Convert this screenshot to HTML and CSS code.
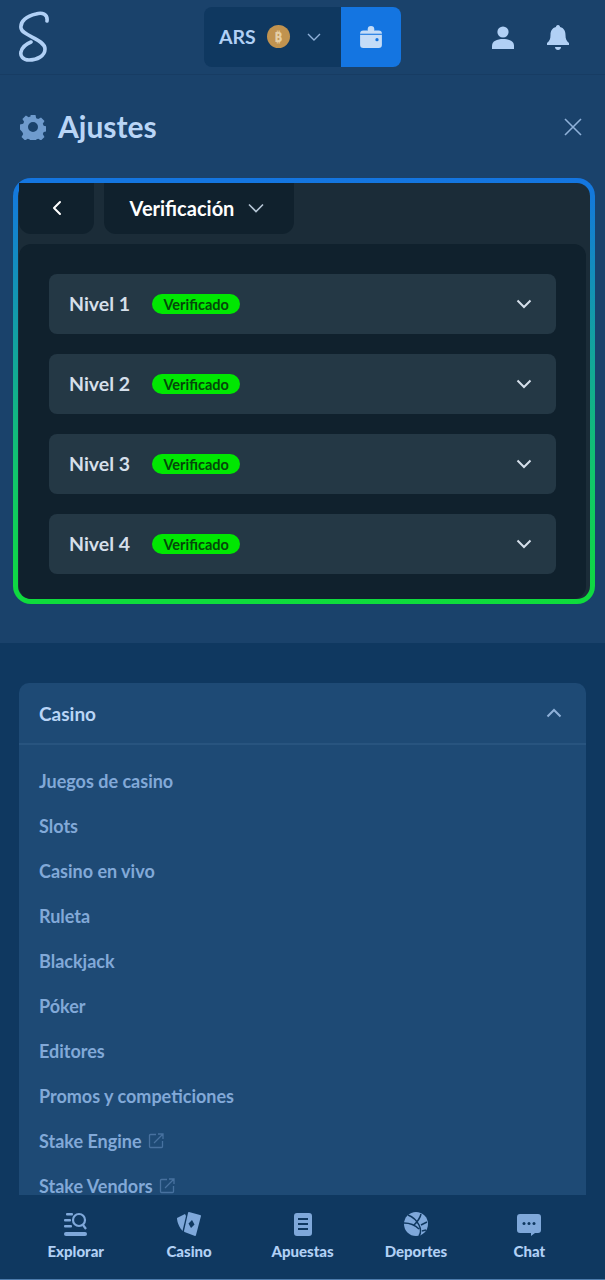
FILE: index.html
```html
<!DOCTYPE html>
<html lang="es">
<head>
<meta charset="UTF-8">
<meta name="viewport" content="width=device-width, initial-scale=1.0">
<title>Ajustes</title>
<link rel="stylesheet" href="styles.css">
</head>
<body>

<header class="topbar">
    <svg class="logo" viewBox="0 0 32 52" fill="none" stroke="#b1d0f5" stroke-width="3.6" stroke-linecap="round"><path d="M30 10C31 3 25 1 19 3C10 5 3 10 4 17C5 25 28 28 28 38C28 45 20 49 12 49C6 49 3 45 4 41C5 36 9 33 14 31"/></svg>
    <div class="wallet">
        <div class="wallet-balance">
            <span class="currency">ARS</span>
            <span class="coin">₿</span>
            <svg class="chev-sm" viewBox="0 0 14 8" fill="none" stroke="#8fb1d9" stroke-width="1.4"><path d="M1 1l6 6 6-6"/></svg>
        </div>
        <button class="wallet-btn">
            <svg width="24" height="24" viewBox="0 0 22 22"><circle cx="11" cy="4" r="3" fill="#c4dcf7"/><rect x="1" y="5" width="20" height="16" rx="3" fill="#c4dcf7"/><rect x="1" y="8" width="20" height="1" fill="#1475e1"/><rect x="15" y="12" width="3" height="3" rx="1.5" fill="#1475e1"/></svg>
        </button>
    </div>
    <div class="top-icons">
        <svg width="24" height="24" viewBox="0 0 24 24" fill="#b1d0f5"><circle cx="12" cy="7" r="5.6"/><path d="M1 24v-3c0-5 5-7 11-7s11 2 11 7v3z"/></svg>
        <svg width="24" height="26" viewBox="0 0 24 26" fill="#b1d0f5"><path d="M12 1c1.500 0 2 1 2 2 4 1 5.500 4 5.500 8 0 4 1 6 3.500 8v2H1v-2c2.500-2 3.500-4 3.500-8 0-4 1.500-7 5.500-8 0-1 .5-2 2-2z"/><path d="M9 23h6c0 2-1.500 3-3 3s-3-1-3-3z"/></svg>
    </div>
</header>

<section class="settings">
    <div class="settings-head">
        <h1 class="settings-title">
            <svg width="26" height="26" viewBox="0 0 26 26"><path fill="#6f9bcd" fill-rule="evenodd" d="M10.500 1h5l.7 3.200 2 .9 2.800-1.700 3.500 3.500-1.700 2.800.9 2 3.200.7v5l-3.200.7-.9 2 1.700 2.800-3.500 3.500-2.800-1.700-2 .9-.7 3.200h-5l-.7-3.200-2-.9-2.800 1.700-3.500-3.500 1.700-2.800-.9-2L0 15.500v-5l3.200-.7.9-2-1.700-2.800L5.900 1.500l2.800 1.700 2-.9zM13 8a5 5 0 1 0 0 10 5 5 0 0 0 0-10z"/></svg>
            <span class="title-text">Ajustes</span>
        </h1>
        <svg class="close" viewBox="0 0 18 18" fill="none" stroke="#8fb1d9" stroke-width="1.600"><path d="M1 1l16 16M17 1L1 17"/></svg>
    </div>

    <div class="panel">
        <div class="panel-tabs">
            <button class="tab tab-back">
                <svg width="10" height="16" viewBox="0 0 10 16" fill="none" stroke="#fff" stroke-width="2" stroke-linecap="round" stroke-linejoin="round"><path d="M8 2L2 8l6 6"/></svg>
            </button>
            <button class="tab tab-select">
                Verificación
                <svg width="16" height="10" viewBox="0 0 16 10" fill="none" stroke="#b6c6d6" stroke-width="1.600"><path d="M1 1.500l7 7 7-7"/></svg>
            </button>
        </div>
        <div class="levels">
            <div class="level">
                <span class="level-name">Nivel 1</span><span class="badge">Verificado</span>
                <svg class="level-chev" viewBox="0 0 16 10" fill="none" stroke="#d5dfea" stroke-width="2"><path d="M1.500 1.500L8 8l6.500-6.500"/></svg>
            </div>
            <div class="level">
                <span class="level-name">Nivel 2</span><span class="badge">Verificado</span>
                <svg class="level-chev" viewBox="0 0 16 10" fill="none" stroke="#d5dfea" stroke-width="2"><path d="M1.500 1.500L8 8l6.500-6.500"/></svg>
            </div>
            <div class="level">
                <span class="level-name">Nivel 3</span><span class="badge">Verificado</span>
                <svg class="level-chev" viewBox="0 0 16 10" fill="none" stroke="#d5dfea" stroke-width="2"><path d="M1.500 1.500L8 8l6.500-6.500"/></svg>
            </div>
            <div class="level">
                <span class="level-name">Nivel 4</span><span class="badge">Verificado</span>
                <svg class="level-chev" viewBox="0 0 16 10" fill="none" stroke="#d5dfea" stroke-width="2"><path d="M1.500 1.500L8 8l6.500-6.500"/></svg>
            </div>
        </div>
    </div>
</section>

<section class="footer-area">
    <div class="menu-card">
        <div class="menu-head">
            <span>Casino</span>
            <svg width="16" height="10" viewBox="0 0 16 10" fill="none" stroke="#8fb1d9" stroke-width="2"><path d="M1.500 8.500L8 2l6.500 6.500"/></svg>
        </div>
        <ul class="menu-list">
            <li>Juegos de casino</li>
            <li>Slots</li>
            <li>Casino en vivo</li>
            <li>Ruleta</li>
            <li>Blackjack</li>
            <li>Póker</li>
            <li>Editores</li>
            <li>Promos y competiciones</li>
            <li>Stake Engine <svg width="16" height="16" viewBox="0 0 16 16" fill="none" stroke="#47719f" stroke-width="1.300"><path d="M8 1.500H2.500a1 1 0 0 0-1 1v11a1 1 0 0 0 1 1h11a1 1 0 0 0 1-1V8M6 10l8.500-8.500M10 1h5v5"/></svg></li>
            <li>Stake Vendors <svg width="16" height="16" viewBox="0 0 16 16" fill="none" stroke="#47719f" stroke-width="1.300"><path d="M8 1.500H2.500a1 1 0 0 0-1 1v11a1 1 0 0 0 1 1h11a1 1 0 0 0 1-1V8M6 10l8.500-8.500M10 1h5v5"/></svg></li>
        </ul>
    </div>
</section>

<nav class="bottom-nav">
    <div class="nav-item">
        <svg width="24" height="24" viewBox="0 0 24 24" fill="#7fa8da"><rect x="2" y="1" width="7" height="2.500" rx="1"/><rect x="0" y="7" width="7" height="2.500" rx="1"/><rect x="0" y="13" width="8" height="2.500" rx="1"/><rect x="0" y="20" width="23" height="4" rx="2"/><circle cx="15" cy="8" r="6" fill="none" stroke="#7fa8da" stroke-width="2.200"/><path d="M19 13l3 4" stroke="#7fa8da" stroke-width="2.200"/></svg>
        <span>Explorar</span>
    </div>
    <div class="nav-item">
        <svg width="24" height="24" viewBox="0 0 24 24" fill="#7fa8da"><path d="M8 2L0 6c0 5 3 10 5.500 13L9 4z"/><path d="M12 0l11 3a1 1 0 0 1 1 1l-5 19a1 1 0 0 1-1 1L7.500 20a1 1 0 0 1-.5-1L11 1a1 1 0 0 1 1-1zm3 8l-3.500 3.500 2.500 4.500 3.500-3.500z" fill-rule="evenodd"/></svg>
        <span>Casino</span>
    </div>
    <div class="nav-item">
        <svg width="24" height="24" viewBox="0 0 24 24"><path fill="#7fa8da" fill-rule="evenodd" d="M6 1h12a3 3 0 0 1 3 3v17a3 3 0 0 1-3 3H6a3 3 0 0 1-3-3V4a3 3 0 0 1 3-3zm1 5v2h10V6zm0 5v2h10v-2zm0 5v2h10v-2z"/></svg>
        <span>Apuestas</span>
    </div>
    <div class="nav-item">
        <svg width="24" height="24" viewBox="0 0 24 24"><circle cx="12" cy="12" r="12" fill="#7fa8da"/><path fill="none" stroke="#0f3860" stroke-width="1.500" d="M4 3c5 2 9 6 11 10s2 8 0 11M0 11c6 0 12 3 15 6M10 13c3-3 6-6 7-11M17 13l6-3M18 19l4-1"/></svg>
        <span>Deportes</span>
    </div>
    <div class="nav-item">
        <svg width="24" height="24" viewBox="0 0 24 24"><path fill="#7fa8da" d="M3 2h18a3 3 0 0 1 3 3v13a3 3 0 0 1-3 3h-3l-4 3v-3H3a3 3 0 0 1-3-3V5a3 3 0 0 1 3-3z"/><circle cx="7" cy="11.500" r="1.500" fill="#0f3860"/><circle cx="12" cy="11.500" r="1.500" fill="#0f3860"/><circle cx="17" cy="11.500" r="1.500" fill="#0f3860"/></svg>
        <span>Chat</span>
    </div>
</nav>

</body>
</html>
```

FILE: styles.css
```css
html, body {
    margin: 0;
    padding: 0;
}
body {
    width: 605px;
    height: 1280px;
    overflow: hidden;
    position: relative;
    background: #0f3860;
    font-family: Lato, "Noto Sans", sans-serif;
}
button {
    border: 0;
    font-family: inherit;
    cursor: pointer;
}

/* top */
.topbar {
    height: 75px;
    box-sizing: border-box;
    background: #1a426b;
    border-bottom: 1px solid #173c63;
    display: flex;
    align-items: center;
    padding: 0 35px 0 17px;
    position: relative;
}
.logo {
    width: 32px;
    height: 52px;
}
.wallet {
    display: flex;
    height: 60px;
    margin-left: 155px;
    margin-top: -1px;
    border-radius: 8px;
    overflow: hidden;
}
.wallet-balance {
    width: 137px;
    box-sizing: border-box;
    background: #0f3860;
    display: flex;
    align-items: center;
    padding-left: 15px;
}
.currency {
    color: #b1d0f5;
    font-size: 19.5px;
    font-weight: 700;
}
.coin {
    width: 23px;
    height: 23px;
    border-radius: 50%;
    background: #c1934f;
    color: #e6cfa6;
    font-size: 14px;
    font-weight: 700;
    display: flex;
    align-items: center;
    justify-content: center;
    margin-left: 11px;
}
.chev-sm {
    width: 14px;
    height: 8px;
    margin-left: 17px;
}
.wallet-btn {
    width: 60px;
    background: #1475e1;
    display: flex;
    align-items: center;
    justify-content: center;
}
.top-icons {
    margin-left: auto;
    display: flex;
    gap: 31px;
    align-items: center;
}

/* settings */
.settings {
    height: 568px;
    background: #1a426b;
    padding: 0 10px 0 13px;
    box-sizing: border-box;
}
.settings-head {
    height: 103px;
    display: flex;
    align-items: center;
    justify-content: space-between;
    padding: 0 13px 0 7px;
}
.settings-title {
    margin: 0;
    display: flex;
    align-items: center;
    gap: 12px;
    color: #b9d5f6;
    font-size: 30px;
    font-weight: 700;
}
.title-text {
    margin-bottom: 2px;
}
.close {
    width: 18px;
    height: 18px;
}
.panel {
    height: 426px;
    box-sizing: border-box;
    border-radius: 18px;
    border: 5px solid transparent;
    background: linear-gradient(#1b2c38, #1b2c38) padding-box, linear-gradient(180deg, #1475e1 0%, #11c66b 70%, #0fdc3c 100%) border-box;
    padding: 0 0 0 1px;
}
.panel-tabs {
    display: flex;
    gap: 10px;
    height: 51px;
}
.tab {
    height: 51px;
    background: #10212d;
    border-radius: 0 0 12px 12px;
    display: flex;
    align-items: center;
    justify-content: center;
    color: #fff;
    font-size: 20px;
    font-weight: 700;
    padding: 0 0 2px;
}
.tab-back {
    width: 75px;
}
.tab-select {
    width: 190px;
    gap: 14px;
    padding-right: 4px;
}
.levels {
    margin: 10px 4px 0 0;
    height: 355px;
    box-sizing: border-box;
    background: #10212d;
    border-radius: 12px 12px 13px 13px;
    padding: 30px 30px 0;
    display: flex;
    flex-direction: column;
    gap: 20px;
}
.level {
    height: 60px;
    background: #243845;
    border-radius: 8px;
    display: flex;
    align-items: center;
    padding: 0 24px 0 20px;
}
.level-name {
    color: #d5dfea;
    font-size: 19.5px;
    font-weight: 700;
    margin-bottom: 2px;
}
.badge {
    margin-left: 22px;
    width: 88px;
    height: 20px;
    border-radius: 10px;
    background: #00e701;
    color: #05470a;
    font-size: 14.5px;
    font-weight: 700;
    display: flex;
    align-items: center;
    justify-content: center;
}
.level-chev {
    width: 16px;
    height: 10px;
    margin-left: auto;
}

/* menu */
.footer-area {
    padding: 40px 19px 0;
}
.menu-card {
    background: #1e4a75;
    border-radius: 10px 10px 0 0;
}
.menu-head {
    height: 62px;
    box-sizing: border-box;
    border-bottom: 2px solid #28547f;
    display: flex;
    align-items: center;
    justify-content: space-between;
    padding: 0 24px 0 20px;
    color: #b9d5f6;
    font-size: 19px;
    font-weight: 700;
}
.menu-list {
    list-style: none;
    margin: 0;
    padding: 13px 20px 0;
}
.menu-list li {
    height: 45px;
    display: flex;
    align-items: center;
    gap: 6px;
    color: #82a9d8;
    font-size: 18px;
    font-weight: 700;
}

/* bottom */
.bottom-nav {
    position: absolute;
    left: 0;
    right: 0;
    bottom: 0;
    height: 85px;
    box-sizing: border-box;
    background: #0f3860;
    border-bottom: 1px solid #4d7bab;
    display: flex;
    padding: 0 19px;
}
.nav-item {
    flex: 1;
    display: flex;
    flex-direction: column;
    align-items: center;
    padding-top: 17px;
    gap: 6px;
    color: #b1d0f5;
    font-size: 15px;
    font-weight: 900;
}
```
